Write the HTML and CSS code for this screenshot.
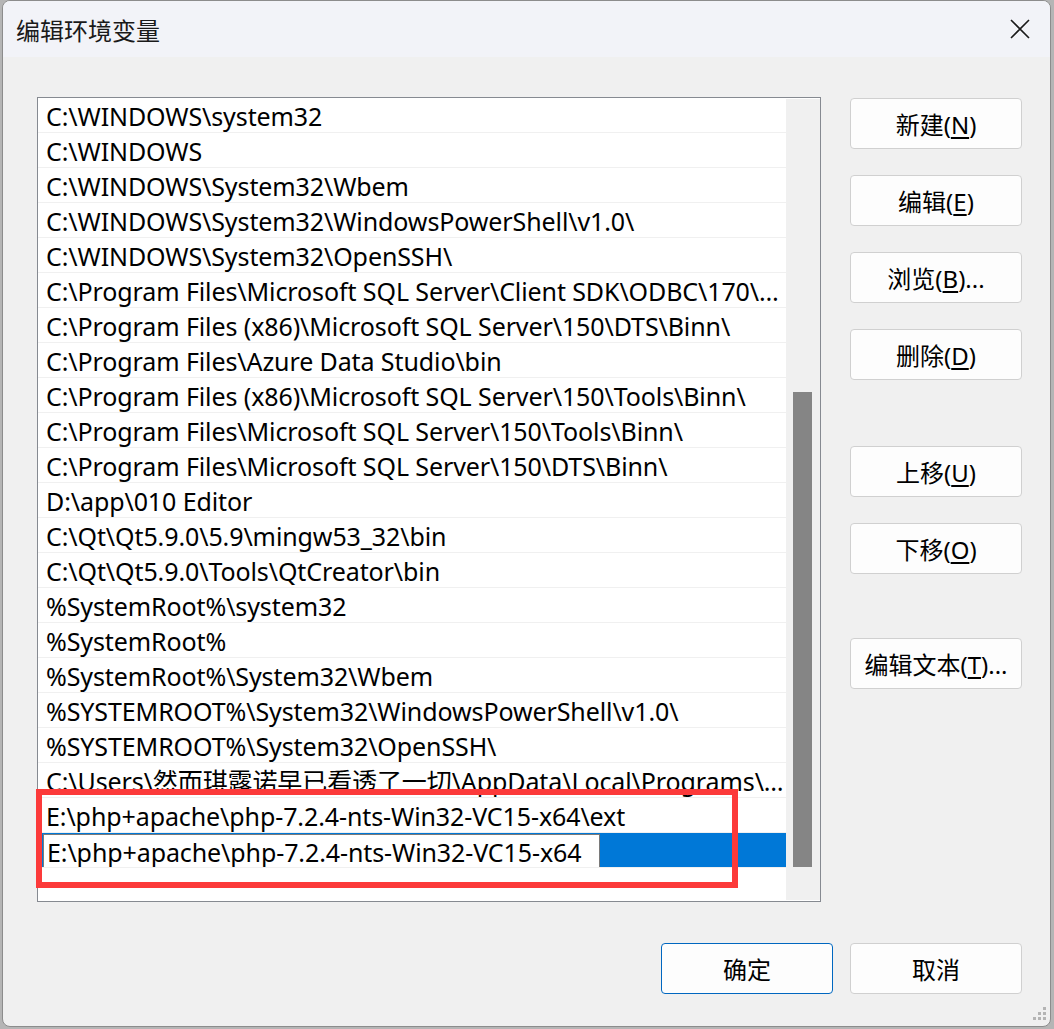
FILE: index.html
```html
<!DOCTYPE html>
<html lang="zh-CN">
<head>
    <meta charset="UTF-8">
    <title>编辑环境变量</title>
    <link rel="stylesheet" href="styles.css">
</head>
<body>
    <div class="window">
        <div class="titlebar">
            <span class="title">编辑环境变量</span>
            <svg class="close" width="20" height="20" viewBox="0 0 20 20">
                <path d="M1 1 L19 19 M19 1 L1 19" stroke="#1a1a1a" stroke-width="1.6" fill="none"/>
            </svg>
        </div>

        <div class="content">
            <div class="listbox">
                <div class="rows">
                    <div class="row">C:\WINDOWS\system32</div>
                    <div class="row">C:\WINDOWS</div>
                    <div class="row">C:\WINDOWS\System32\Wbem</div>
                    <div class="row">C:\WINDOWS\System32\WindowsPowerShell\v1.0\</div>
                    <div class="row">C:\WINDOWS\System32\OpenSSH\</div>
                    <div class="row">C:\Program Files\Microsoft SQL Server\Client SDK\ODBC\170\Tools\Binn\</div>
                    <div class="row">C:\Program Files (x86)\Microsoft SQL Server\150\DTS\Binn\</div>
                    <div class="row">C:\Program Files\Azure Data Studio\bin</div>
                    <div class="row">C:\Program Files (x86)\Microsoft SQL Server\150\Tools\Binn\</div>
                    <div class="row">C:\Program Files\Microsoft SQL Server\150\Tools\Binn\</div>
                    <div class="row">C:\Program Files\Microsoft SQL Server\150\DTS\Binn\</div>
                    <div class="row">D:\app\010 Editor</div>
                    <div class="row">C:\Qt\Qt5.9.0\5.9\mingw53_32\bin</div>
                    <div class="row">C:\Qt\Qt5.9.0\Tools\QtCreator\bin</div>
                    <div class="row">%SystemRoot%\system32</div>
                    <div class="row">%SystemRoot%</div>
                    <div class="row">%SystemRoot%\System32\Wbem</div>
                    <div class="row">%SYSTEMROOT%\System32\WindowsPowerShell\v1.0\</div>
                    <div class="row">%SYSTEMROOT%\System32\OpenSSH\</div>
                    <div class="row">C:\Users\然而琪露诺早已看透了一切\AppData\Local\Programs\Python\Python38\Scripts\</div>
                    <div class="row">E:\php+apache\php-7.2.4-nts-Win32-VC15-x64\ext</div>
                    <div class="row selected">
                        <input class="edit" type="text" value="E:\php+apache\php-7.2.4-nts-Win32-VC15-x64">
                    </div>
                </div>
                <div class="scrollbar">
                    <div class="thumb"></div>
                </div>
            </div>

            <div class="actions">
                <button class="btn">新建(<u>N</u>)</button>
                <button class="btn">编辑(<u>E</u>)</button>
                <button class="btn">浏览(<u>B</u>)...</button>
                <button class="btn">删除(<u>D</u>)</button>
                <button class="btn group">上移(<u>U</u>)</button>
                <button class="btn">下移(<u>O</u>)</button>
                <button class="btn group">编辑文本(<u>T</u>)...</button>
            </div>
        </div>

        <div class="footer">
            <button class="btn primary">确定</button>
            <button class="btn">取消</button>
        </div>

        <div class="mark"></div>

        <svg class="grip" width="16" height="16" viewBox="0 0 16 16">
            <rect x="11" y="1" width="3" height="3" fill="#b4b4b4"/>
            <rect x="6" y="6" width="3" height="3" fill="#b4b4b4"/>
            <rect x="11" y="6" width="3" height="3" fill="#b4b4b4"/>
            <rect x="1" y="11" width="3" height="3" fill="#b4b4b4"/>
            <rect x="6" y="11" width="3" height="3" fill="#b4b4b4"/>
            <rect x="11" y="11" width="3" height="3" fill="#b4b4b4"/>
        </svg>
    </div>
</body>
</html>
```

FILE: styles.css
```css
body {
    margin: 0;
    background-color: #b5b5b5;
    font-family: "Noto Sans", "Noto Sans CJK SC", sans-serif;
    color: #000;
}
.window {
    position: relative;
    box-sizing: border-box;
    margin-left: 2px;
    width: 1049px;
    height: 1027px;
    border: 1px solid #8c8c8c;
    border-radius: 8px;
    overflow: hidden;
    background-color: #f0f0f0;
}
.titlebar {
    height: 56px;
    display: flex;
    align-items: center;
    justify-content: space-between;
    padding: 0 20px 0 13px;
    background-color: #f2f3f8;
}
.title {
    font-family: "Noto Sans CJK SC", sans-serif;
    font-size: 24px;
    color: #1a1a1a;
}
.close {
    display: block;
}
.content {
    display: flex;
    gap: 29px;
    padding: 40px 28px 0 34px;
}
.listbox {
    box-sizing: border-box;
    width: 784px;
    height: 805px;
    border: 1px solid #868a91;
    background-color: #fff;
    display: flex;
}
.rows {
    flex: 1;
    min-width: 0;
}
.row {
    box-sizing: border-box;
    height: 35px;
    line-height: 37px;
    padding: 0 0 0 8px;
    border-bottom: 1px solid #f0f0f0;
    font-size: 25px;
    letter-spacing: -0.1px;
    white-space: nowrap;
    overflow: hidden;
    text-overflow: ellipsis;
}
.row.selected {
    background-color: #0078d7;
    padding: 1px 0 0 5px;
    border-bottom-color: #f0f0f0;
}
.edit {
    box-sizing: border-box;
    display: block;
    width: 557px;
    height: 34px;
    margin: 0;
    padding: 2px 3px 0;
    border: 1px solid #7a7a7a;
    border-radius: 0;
    outline: none;
    background-color: #fff;
    font-family: "Noto Sans", "Noto Sans CJK SC", sans-serif;
    font-size: 25px;
    letter-spacing: -0.1px;
    color: #000;
}
.scrollbar {
    width: 34px;
    margin: 1px 0;
    background-color: #f0f0f0;
}
.thumb {
    width: 19px;
    height: 475px;
    margin: 293px 0 0 7px;
    background-color: #858585;
}
.actions {
    display: flex;
    flex-direction: column;
    gap: 26px;
    padding-top: 1px;
}
.btn {
    box-sizing: border-box;
    width: 172px;
    height: 51px;
    padding: 0;
    border: 1px solid #d0d0d0;
    border-radius: 4px;
    background-color: #fdfdfd;
    font-family: "Noto Sans", "Noto Sans CJK SC", sans-serif;
    font-size: 24px;
    color: #000;
}
.btn u {
    text-underline-offset: 3px;
}
.actions .group {
    margin-top: 40px;
}
.actions .group:last-child {
    margin-top: 38px;
}
.btn.primary {
    border-color: #0067c0;
}
.footer {
    display: flex;
    justify-content: flex-end;
    gap: 17px;
    padding-right: 28px;
    margin-top: 41px;
}
.mark {
    position: absolute;
    left: 33px;
    top: 788px;
    width: 702px;
    height: 99px;
    box-sizing: border-box;
    border: 6px solid #fc3a3a;
}
.grip {
    position: absolute;
    right: 2px;
    bottom: 4px;
}
```
